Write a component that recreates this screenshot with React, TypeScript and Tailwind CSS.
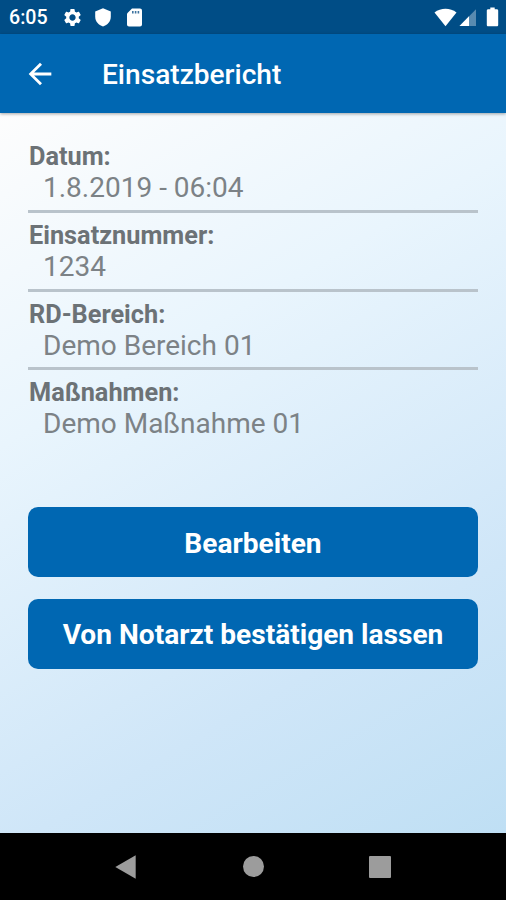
import type { ReactNode } from "react";
import { MdArrowBack, MdSettings } from "react-icons/md";

interface ReportField {
  label: string;
  value: string;
}

const FIELDS: ReportField[] = [
  { label: "Datum:", value: "1.8.2019 - 06:04" },
  { label: "Einsatznummer:", value: "1234" },
  { label: "RD-Bereich:", value: "Demo Bereich 01" },
  { label: "Maßnahmen:", value: "Demo Maßnahme 01" },
];

function StatusBar() {
  return (
    <div className="flex h-[34px] shrink-0 items-center bg-[#004d86] pr-[7px] pl-[9px] text-white">
      <span className="w-[53px] pt-[2px] text-[19.6px] leading-none font-medium">6:05</span>
      <MdSettings size={21} />
      <svg className="ml-[11px] h-[19px] w-[18px]" viewBox="0 0 18 19" fill="currentColor">
        <path d="M9 0.3 16.8 3.6V8.8C16.8 13.3 13.6 17.2 9 18.5 4.4 17.2 1.2 13.3 1.2 8.8V3.6Z" />
      </svg>
      <svg className="ml-[14px] h-[19px] w-[17px]" viewBox="0 0 17 19" fill="currentColor">
        <path d="M6 0.5H14C15.1 0.5 16 1.4 16 2.5V16.5C16 17.6 15.1 18.5 14 18.5H3C1.9 18.5 1 17.6 1 16.5V5.5Z" />
        <path d="M6 3H7.6V5.6H6ZM8.8 3H10.4V5.6H8.8ZM11.6 3H13.2V5.6H11.6Z" fill="#3f74a0" />
      </svg>
      <div className="ml-auto flex items-center">
        <svg className="h-[19px] w-[23px]" viewBox="0 0 23 19" fill="currentColor">
          <path d="M0.5 4.4C6.8-.5 16.2-.5 22.5 4.4L11.5 18.2Z" />
        </svg>
        <svg className="ml-[2px] h-[19px] w-[18px]" viewBox="0 0 18 19" fill="currentColor">
          <path opacity="0.35" d="M0.5 18 17 1.2V18Z" />
          <path d="M0.5 18 10 8.3V18Z" />
        </svg>
        <svg className="ml-[9px] h-[20px] w-[13px]" viewBox="0 0 13 20" fill="currentColor">
          <path d="M4.3 0.5H8.7V2.3H10.8C11.6 2.3 12.2 2.9 12.2 3.7V17.9C12.2 18.7 11.6 19.3 10.8 19.3H2.2C1.4 19.3 0.8 18.7 0.8 17.9V3.7C0.8 2.9 1.4 2.3 2.2 2.3H4.3Z" />
        </svg>
      </div>
    </div>
  );
}

function AppBar() {
  return (
    <header className="z-10 flex h-[79px] shrink-0 items-center bg-[#0067b2] pl-[23px] text-white shadow-[0_1px_3px_rgba(0,0,0,0.35)]">
      <MdArrowBack size={34} />
      <h1 className="ml-[45px] pt-[3px] text-[28.1px] leading-none font-medium">Einsatzbericht</h1>
    </header>
  );
}

function FieldRow({ label, value }: ReportField) {
  return (
    <div className="h-[78.75px] border-b-[3px] border-[#b9c3cb] pt-[8px] text-[#6c7276] last:border-transparent">
      <div className="pl-px text-[25.3px] leading-[30px] font-bold">{label}</div>
      <div className="pl-[15px] text-[28px] leading-[32.5px] font-normal text-[#7c8286]">{value}</div>
    </div>
  );
}

function ActionButton({ children }: { children: ReactNode }) {
  return (
    <button className="h-[70px] w-full rounded-[10px] bg-[#0067b2] pt-[3px] text-[28.1px] leading-none font-bold text-white">
      {children}
    </button>
  );
}

function NavBar() {
  return (
    <nav className="flex h-[67px] shrink-0 items-center justify-between bg-black pr-[115px] pl-[115px] text-[#9c9c9c]">
      <svg className="h-6 w-[22px]" viewBox="0 0 22 24" fill="currentColor">
        <path d="M0.3 12 20.7 0.3V23.7Z" />
      </svg>
      <div className="size-[21px] rounded-full bg-[#9c9c9c]" />
      <div className="size-[22px] rounded-[1px] bg-[#9c9c9c]" />
    </nav>
  );
}

export default function App() {
  return (
    <div className="flex h-[900px] w-[506px] flex-col overflow-hidden font-['Roboto',sans-serif]">
      <StatusBar />
      <AppBar />
      <main className="flex-1 bg-[linear-gradient(150deg,#fdfdfd_0%,#e9f5fd_33%,#cfe6f8_73%,#bfdff4_100%)] px-[28px] pt-[21px]">
        <div>
          {FIELDS.map((field) => (
            <FieldRow key={field.label} {...field} />
          ))}
        </div>
        <div className="mt-[58.4px] flex flex-col gap-[21.5px]">
          <ActionButton>Bearbeiten</ActionButton>
          <ActionButton>Von Notarzt bestätigen lassen</ActionButton>
        </div>
      </main>
      <NavBar />
    </div>
  );
}
